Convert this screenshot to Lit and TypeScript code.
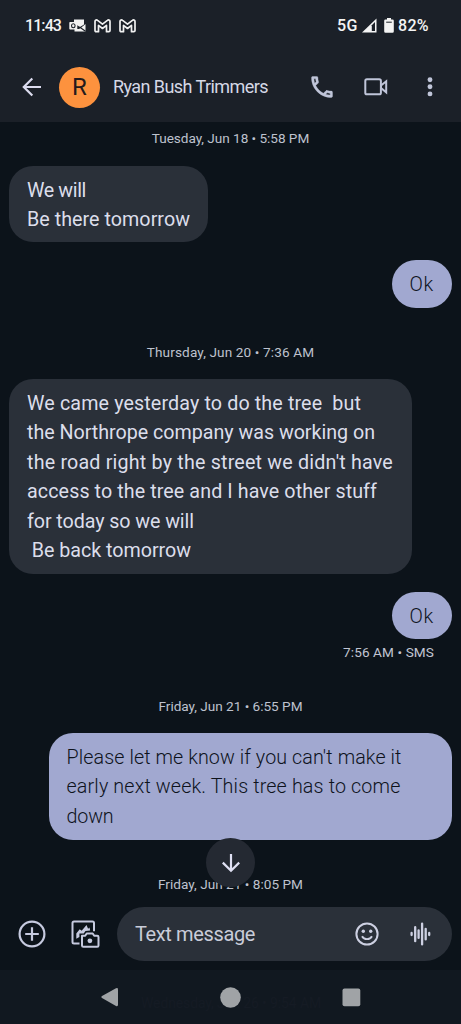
import { LitElement, html, css, svg } from "lit";
import { customElement, property } from "lit/decorators.js";

/* One line of text whose tracking is adjusted so that it spans a given width. */
@customElement("text-line")
class TextLine extends LitElement {
  @property({ type: Number }) span = 0;
  @property() text = "";
  static styles = css`
    :host { display: block; white-space: pre; }
    .t { display: inline-block; }
  `;
  firstUpdated() {
    const el = this.renderRoot.querySelector(".t") as HTMLElement;
    const w = el.getBoundingClientRect().width;
    const n = this.text.length;
    if (this.span && n) {
      const ls = (this.span - w) / n;
      el.style.letterSpacing = ls.toFixed(3) + "px";
    }
  }
  render() {
    return html`<span class="t">${this.text}</span>`;
  }
}

type Line = [string, number];
const line = ([t, w]: Line) => html`<text-line .text=${t} .span=${w}></text-line>`;

const outlook = svg`<svg width="17" height="14" viewBox="0 0 17 14"><path d="M5 .5h10v5l-4 2.6L7 5.5H5z" fill="#f1f1f1"/><path d="M16.5 5v7.5h-11V10H10l2-1.3z" fill="#f1f1f1"/><path d="M10.500 8l6 4.300" stroke="#1b2028" stroke-width="1.100"/><rect x=".3" y="3" width="8" height="7.600" rx=".8" fill="#f1f1f1"/><ellipse cx="4.300" cy="6.800" rx="1.800" ry="2" fill="none" stroke="#1b2028" stroke-width="1.100"/></svg>`;
const gmail = svg`<svg width="17" height="14" viewBox="0 0 17 14" fill="none" stroke="#f1f1f1" stroke-width="1.700" stroke-linejoin="round"><path d="M1 2.400C1 1 2.600.6 3.600 1.400L8.500 5.100l4.900-3.700C14.400.6 16 1 16 2.400v9.100c0 .8-.4 1.200-1.200 1.200H12.500V6.400l-4 3.100-4-3.100v6.300H2.200c-.8 0-1.200-.4-1.200-1.200z"/></svg>`;
const signal = svg`<svg width="15" height="15" viewBox="0 0 15 15"><path d="M0 14.500L14.500.500v14z" fill="#f4f4f4"/><path d="M9.800 7.200l3.200-3.200v9H9.800z" fill="#1b2028"/></svg>`;
const battery = svg`<svg width="10" height="15" viewBox="0 0 10 15"><path d="M3 0h4v1.500h1.500q1.300 0 1.300 1.300v10.800q0 1.200-1.300 1.200h-7Q.2 14.800.2 13.600V2.800q0-1.300 1.300-1.300H3z" fill="#f4f4f4"/><path d="M2.200 4.200h5.600" stroke="#1b2028" stroke-width="1"/></svg>`;
const back = svg`<svg width="20" height="20" viewBox="0 0 20 20" fill="none" stroke="#dcdcef" stroke-width="2.200"><path d="M19 10H2.500M10.300 1.500L1.800 10l8.500 8.500"/></svg>`;
const phone = svg`<svg width="28" height="28" viewBox="0 0 24 24" fill="#c0c5d9" stroke="#c0c5d9" stroke-width=".3"><path d="M6.540 5c.06.890.210 1.760.450 2.590l-1.200 1.200c-.410-1.200-.670-2.470-.760-3.790h1.510m9.860 12.020c.850.240 1.720.390 2.600.450v1.490c-1.320-.090-2.590-.350-3.800-.750l1.200-1.190M7.500 3H4c-.550 0-1 .450-1 1 0 9.390 7.610 17 17 17 .550 0 1-.450 1-1v-3.490c0-.550-.450-1-1-1-1.240 0-2.450-.2-3.570-.570-.1-.040-.210-.050-.310-.050-.260 0-.510.1-.710.290l-2.200 2.200c-2.830-1.450-5.150-3.760-6.590-6.590l2.200-2.200c.280-.280.360-.670.250-1.020C8.700 6.450 8.500 5.250 8.500 4c0-.550-.450-1-1-1z"/></svg>`;
const video = svg`<svg width="24" height="18" viewBox="0 0 24 18" fill="none" stroke="#c0c5d9" stroke-width="2"><rect x="1.300" y="1.300" width="15.600" height="15" rx="1.600"/><path d="M17 7.500l5.200-4.200v11L17 10.100z"/></svg>`;
const more = svg`<svg width="6" height="20" viewBox="0 0 6 20" fill="#c0c5d9"><circle cx="3" cy="2.700" r="2.450"/><circle cx="3" cy="9.800" r="2.450"/><circle cx="3" cy="16.900" r="2.450"/></svg>`;
const plus = svg`<svg width="28" height="28" viewBox="0 0 28 28" fill="none" stroke="#c6cadf" stroke-width="2.200"><circle cx="14" cy="14" r="12.400"/><path d="M14 7.200v13.600M7.200 14h13.600"/></svg>`;
const gallery = svg`<svg width="29" height="28" viewBox="0 0 29 28"><g fill="none" stroke="#c6cadf" stroke-width="2" stroke-linejoin="round"><path d="M8.500 23.500H3q-1.500 0-1.500-1.500V3q0-1.500 1.500-1.500h18.500q1.500 0 1.500 1.500v8.300"/><path d="M11 15.700h3.200l1.500-2.200h6l1.500 2.200h3q1.300 0 1.300 1.300v8.500q0 1.300-1.300 1.300H12.300q-1.300 0-1.300-1.300V15.700z"/></g><path d="M5.300 18.800v-5.400l3.400-4.200 2 1.600L15.500 5l1.600 3.800 1.400-1.300.7 2.900-4.700.6-1.800 2.400H8.400v3.600z" fill="#c6cadf"/><circle cx="18.900" cy="20.800" r="2.400" fill="#c6cadf"/></svg>`;
const smile = svg`<svg width="24" height="24" viewBox="0 0 24 24" fill="none" stroke="#cdd0e2" stroke-width="2"><circle cx="12" cy="12" r="10.600"/><path d="M7 14.300q1.600 2.900 5 2.900t5-2.900" stroke-width="1.800"/><circle cx="8.300" cy="9.300" r="1.700" fill="#cdd0e2" stroke="none"/><circle cx="15.700" cy="9.300" r="1.700" fill="#cdd0e2" stroke="none"/></svg>`;
const wave = svg`<svg width="21" height="24" viewBox="0 0 21 24" fill="none" stroke="#cdd0e2" stroke-width="2.300" stroke-linecap="round"><path d="M1.600 11v2M5.200 5.200v14M8.600 8.300v7.600M12.100 1.600v20.800M15.700 6.800v10.600M19.200 11v2"/></svg>`;
const down = svg`<svg width="20" height="20" viewBox="0 0 20 20" fill="none" stroke="#dfe0f3" stroke-width="2.200"><path d="M10 1v16.800M1.800 9.600L10 17.800l8.200-8.200"/></svg>`;

@customElement("app-root")
class AppRoot extends LitElement {
  static styles = css`
    :host {
      display: flex; flex-direction: column; position: relative;
      width: 461px; height: 1024px; overflow: hidden;
      background: #0c131a; color: #dcdeeb;
      font-family: Roboto, "Noto Sans", sans-serif;
    }
    svg { display: block; flex: none; }
    .top { background: #1b2028; height: 122px; flex: none; box-sizing: border-box; padding-top: 14px; }
    .status { display: flex; align-items: center; height: 23px; padding: 0 32px 0 25px; color: #f4f4f4; font-size: 16px; font-weight: 500; line-height: 23px; }
    .notifs { display: flex; gap: 8px; margin-left: 8px; }
    .grow { flex: 1; }
    .sig { margin: 0 7px 0 4px; }
    .pct { margin-left: 4px; }
    .bar { display: flex; align-items: center; height: 44px; margin-top: 28px; padding: 0 28.500px 0 22px; }
    .avatar { width: 41px; height: 41px; margin-left: 17px; border-radius: 50%; background: #fd923e; color: #241a1c; display: flex; align-items: center; justify-content: center; font-size: 24px; }
    .name { margin-left: 13px; font-size: 18px; color: #d5d8e6; line-height: 24px; }
    .vid { margin: 0 38.500px 0 28px; }
    .chat { flex: 1; display: flex; flex-direction: column; align-items: flex-start; padding: 6px 9px 0; min-height: 0; }
    .date { align-self: center; font-size: 13.600px; line-height: 20px; color: #bec2ce; }
    .bubble { box-sizing: border-box; padding: 10px 18px 8px; border-radius: 24px; background: #2a3039; font-size: 19.700px; line-height: 29.400px; }
    .mine { align-self: flex-end; background: #a1a8d0; color: #0e131c; font-weight: 300; }
    .b1 { width: 199px; height: 76.500px; margin: 17.500px 0 18px; }
    .ok { width: 60.500px; height: 47.500px; }
    .ok1 { margin-bottom: 34.500px; }
    .b2 { width: 403px; height: 195px; margin: 17px 0 17.500px; }
    .sent { align-self: flex-end; margin: 3px 18px 34px 0; font-size: 13.600px; line-height: 20px; color: #c1c5d3; }
    .b3 { width: 403.500px; height: 107px; margin: 17px 0 33.500px; }
    .composer { height: 73px; flex: none; display: flex; align-items: center; box-sizing: border-box; padding: 0 9px 0 18px; background: #0c131a; z-index: 1; position: relative; }
    .gal { margin-left: 25px; }
    .field { flex: 1; margin-left: 17px; height: 54px; border-radius: 27px; background: #2a3039; display: flex; align-items: center; padding: 0 21px 0 18px; font-size: 20px; line-height: 28px; color: #c9ccd9; }
    .wave { margin-left: 31px; }
    .nav { height: 54px; flex: none; background: #111820; position: relative; display: flex; align-items: center; justify-content: space-between; padding: 0 100px 0 100px; }
    .ghost { position: absolute; left: 141px; top: 23px; font-size: 14px; line-height: 20px; color: #151b24; }
    .nav svg { position: relative; }
    .jump { position: absolute; left: 206px; top: 838px; width: 49px; height: 49px; border-radius: 50%; background: #242932; display: flex; align-items: center; justify-content: center; z-index: 2; }
  `;
  render() {
    return html`
      <div class="top">
        <div class="status">
          ${line(["11:43", 36])}
          <div class="notifs">${outlook}${gmail}${gmail}</div>
          <div class="grow"></div>
          ${line(["5G", 21])}
          <div class="sig">${signal}</div>
          ${battery}
          <div class="pct">${line(["82%", 31])}</div>
        </div>
        <div class="bar">
          ${back}
          <div class="avatar">R</div>
          <div class="name">${line(["Ryan Bush Trimmers", 155])}</div>
          <div class="grow"></div>
          ${phone}
          <div class="vid">${video}</div>
          ${more}
        </div>
      </div>
      <div class="chat">
        <div class="date">${line(["Tuesday, Jun 18 • 5:58 PM", 157.5])}</div>
        <div class="bubble b1">${line(["We will", 59])}${line(["Be there tomorrow", 163])}</div>
        <div class="bubble mine ok ok1">${line(["Ok", 24.5])}</div>
        <div class="date">${line(["Thursday, Jun 20 • 7:36 AM", 167.5])}</div>
        <div class="bubble b2">
          ${line(["We came yesterday to do the tree  but", 334])}
          ${line(["the Northrope company was working on", 348])}
          ${line(["the road right by the street we didn't have", 366])}
          ${line(["access to the tree and I have other stuff", 350])}
          ${line(["for today so we will", 167])}
          ${line([" Be back tomorrow", 164])}
        </div>
        <div class="bubble mine ok">${line(["Ok", 24.5])}</div>
        <div class="sent">${line(["7:56 AM • SMS", 91])}</div>
        <div class="date">${line(["Friday, Jun 21 • 6:55 PM", 144])}</div>
        <div class="bubble mine b3">
          ${line(["Please let me know if you can't make it", 335])}
          ${line(["early next week. This tree has to come", 334])}
          ${line(["down", 47])}
        </div>
        <div class="date">${line(["Friday, Jun 21 • 8:05 PM", 145])}</div>
      </div>
      <div class="composer">
        ${plus}
        <div class="gal">${gallery}</div>
        <div class="field">
          ${line(["Text message", 120])}
          <div class="grow"></div>
          ${smile}
          <div class="wave">${wave}</div>
        </div>
      </div>
      <div class="nav">
        <div class="ghost">${line(["Wednesday, Jun 26 • 9:54 AM", 180])}</div>
        <svg width="19" height="20" viewBox="0 0 19 20"><path d="M2 9L16 1.200q2-.9 2 1.200v15.400q0 2-2 1.200L2 11q-1.600-1 0-2z" fill="#a0a3a6"/></svg>
        <svg width="21" height="21" viewBox="0 0 21 21"><circle cx="10.500" cy="10.500" r="10.300" fill="#a0a3a6"/></svg>
        <svg width="19" height="19" viewBox="0 0 19 19"><rect x=".5" y=".5" width="17.800" height="17.800" rx="2" fill="#a0a3a6"/></svg>
      </div>
      <div class="jump">${down}</div>
    `;
  }
}
